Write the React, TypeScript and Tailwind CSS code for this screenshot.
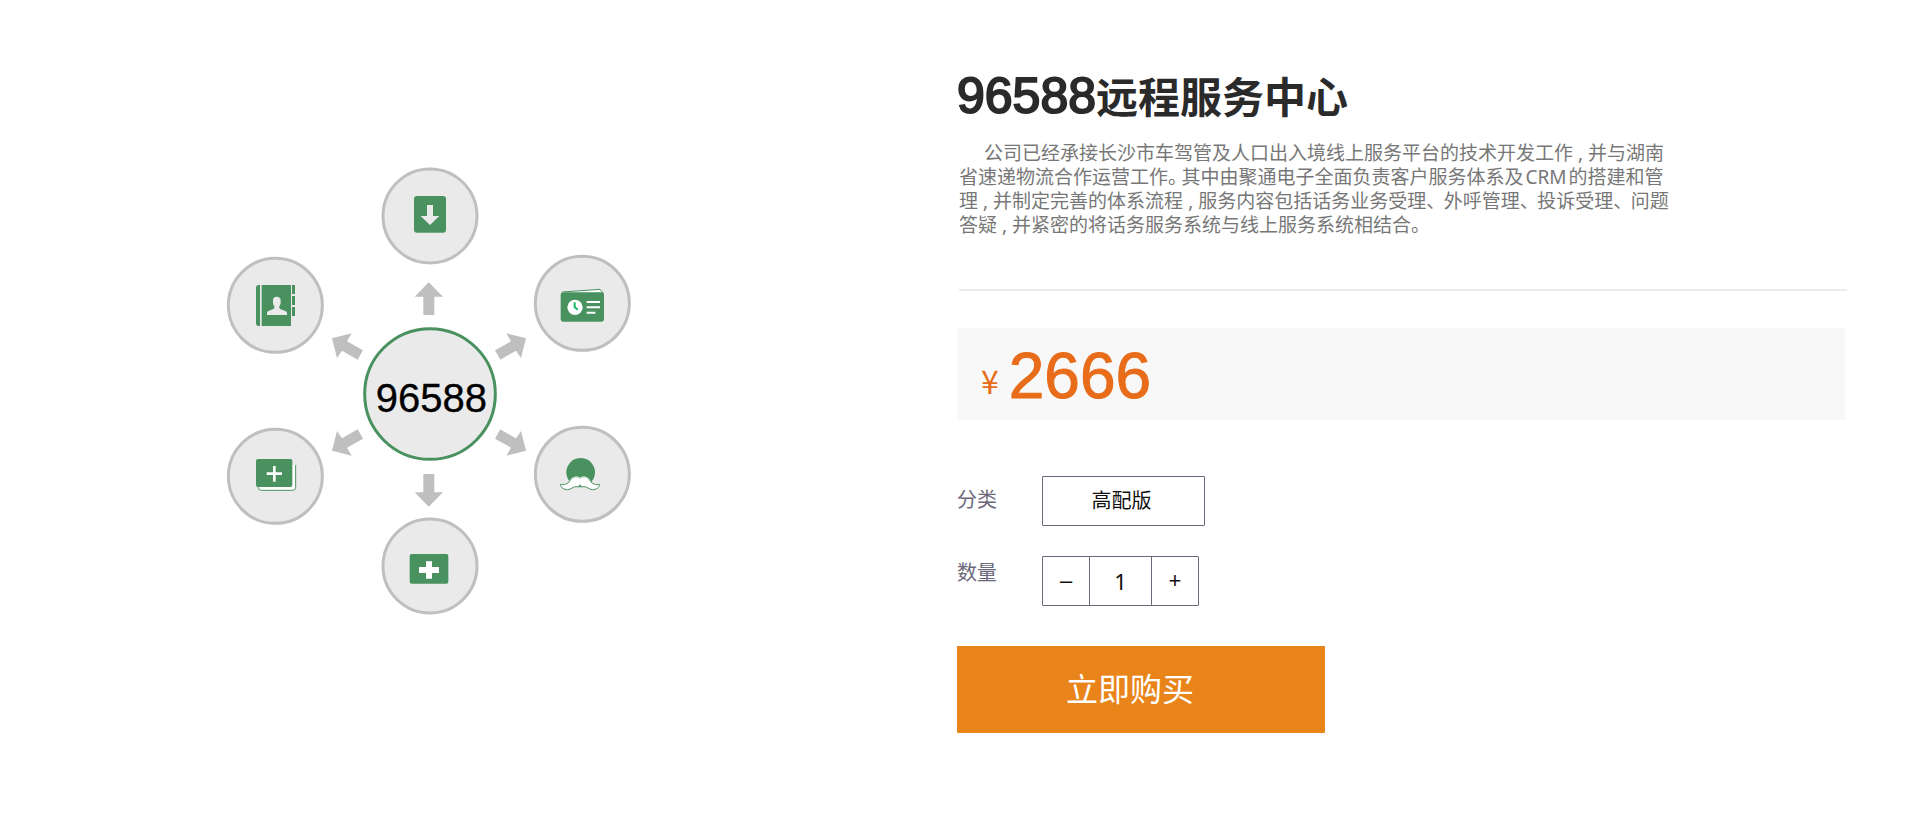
import { useState } from "react";

const GREEN = "#49915f";
const GREY = "#bfbfbf";

const satellites = [
  [660, 198],
  [1117, 460],
  [1117, 973],
  [660, 1248],
  [196, 979],
  [196, 466],
];

function Arrows() {
  const diagonal = "M948 565L889 550L903 574L855 601L871 629L918 602L933 624Z";
  const upright = "M656 397L699 440H673V495H640V440H614Z";
  return (
    <g fill={GREY}>
      <path d={upright} />
      <path d={upright} transform="translate(0 1467) scale(1 -1)" />
      <path d={diagonal} />
      <path d={diagonal} transform="translate(1314 0) scale(-1 1)" />
      <path d={diagonal} transform="translate(0 1467) scale(1 -1)" />
      <path d={diagonal} transform="translate(1314 1467) scale(-1 -1)" />
    </g>
  );
}

function DownloadIcon() {
  return (
    <g>
      <rect x="612" y="138" width="96" height="110" rx="9" fill={GREEN} />
      <path d="M651 165H669V198H688L660 225L632 198H651Z" fill="#eaeaea" />
    </g>
  );
}

function ContactsIcon() {
  return (
    <g fill={GREEN}>
      <path d="M150 405H146Q138 405 138 413V520Q138 528 146 528H150Z" />
      <rect x="155" y="405" width="88" height="123" />
      <rect x="246" y="405" width="9" height="27" />
      <rect x="246" y="438" width="9" height="27" />
      <rect x="246" y="471" width="9" height="27" />
      <path
        d="M200 440C192 440 188 445 189 452V460Q190 466 193 468V474C190 480 171 480 171 489V495H231V489C231 480 210 480 208 474V468Q211 466 212 460V452C213 445 208 440 200 440Z"
        fill="#eaeaea"
      />
    </g>
  );
}

function CardIcon() {
  return (
    <g>
      <path d="M1057 426L1170 418L1180 431" fill="#ffffff" stroke={GREEN} strokeWidth="3" />
      <path d="M1160 427L1169 421L1175 427Z" fill="#ffffff" />
      <rect x="1052" y="427" width="130" height="88" rx="7" fill={GREEN} />
      <circle cx="1095" cy="472" r="23" fill="#ffffff" />
      <path d="M1094 457V471L1103 479" fill="none" stroke="#19b765" strokeWidth="6" />
      <path d="M1130 456H1170M1130 472H1170M1130 488H1156" stroke="#ffffff" strokeWidth="6" />
    </g>
  );
}

function MustacheIcon() {
  return (
    <g>
      <circle cx="1112" cy="967" r="43" fill={GREEN} />
      <path
        d="M1110 985C1100 977 1088 981 1080 992C1073 1002 1062 1006 1051 1003C1052 1013 1062 1019 1073 1019C1085 1018 1088 1010 1098 1010C1104 1010 1107 1012 1110 1009C1113 1012 1116 1010 1122 1010C1132 1010 1136 1018 1147 1019C1159 1019 1168 1013 1169 1003C1158 1006 1147 1002 1140 992C1132 981 1120 977 1110 985Z"
        fill="#ffffff"
        stroke={GREEN}
        strokeWidth="3"
      />
      <path d="M1080 992C1088 981 1100 977 1110 985C1120 977 1132 981 1140 992" fill="none" stroke="#ffffff" strokeWidth="3" />
      <path d="M1104 1011L1110 1003L1116 1011Z" fill={GREEN} />
    </g>
  );
}

function FirstAidIcon() {
  return (
    <g>
      <rect x="599" y="1212" width="116" height="89" rx="6" fill={GREEN} />
      <path d="M657 1234V1286M627 1260H687" stroke="#ffffff" strokeWidth="18" />
    </g>
  );
}

function AddCardsIcon() {
  return (
    <g>
      <path d="M145 1010V1013Q146 1021 154 1021H248Q257 1021 257 1012V945H246V1010Z" fill="#ffffff" />
      <path d="M145 1010V1013Q146 1021 154 1021H248Q257 1021 257 1012V945" fill="none" stroke={GREEN} strokeWidth="3" />
      <rect x="138" y="927" width="109" height="84" rx="6" fill={GREEN} />
      <path d="M193 948V995M170 971H216" stroke="#ffffff" strokeWidth="8" />
    </g>
  );
}

function ServiceDiagram() {
  return (
    <svg
      viewBox="51 51 1212 1344"
      className="h-auto w-[404px] max-w-full"
      role="img"
      aria-label="96588"
    >
      {satellites.map(([cx, cy]) => (
        <circle key={`${cx}-${cy}`} cx={cx} cy={cy} r="141" fill="#eaeaea" stroke={GREY} strokeWidth="9" />
      ))}
      <Arrows />
      <circle cx="660" cy="732" r="196" fill="#eaeaea" stroke={GREEN} strokeWidth="9" />
      <DownloadIcon />
      <CardIcon />
      <MustacheIcon />
      <FirstAidIcon />
      <AddCardsIcon />
      <ContactsIcon />
      <text
        x="664"
        y="785"
        textAnchor="middle"
        fontSize="120"
        className="fill-black stroke-black stroke-1 font-['Liberation_Sans',sans-serif]"
      >
        96588
      </text>
    </svg>
  );
}

function Comma() {
  return <span className="mx-[5px]">,</span>;
}

function Pause() {
  return <span className="mr-2 [font-feature-settings:'halt']">、</span>;
}

export default function App() {
  const [quantity, setQuantity] = useState(1);

  return (
    <main className="grid min-h-screen grid-cols-[957fr_963fr] bg-white font-['Liberation_Sans','Noto_Sans_CJK_SC',sans-serif]">
      <section className="pt-[167px] pl-[227px]">
        <ServiceDiagram />
      </section>

      <section className="pt-[66px] pr-[75px]">
        <h1 className="text-[42px] leading-[60px] font-bold text-[#2b2a2b]">
          <span className="text-[50px] font-normal [-webkit-text-stroke:2px_#2b2a2b]">96588</span>
          远程服务中心
        </h1>

        <p className="mt-3 pl-0.5 indent-[25px] font-['Noto_Sans','Noto_Sans_CJK_SC',sans-serif] text-[19px] leading-6 whitespace-nowrap text-[#777777]">
          公司已经承接长沙市车驾管及人口出入境线上服务平台的技术开发工作
          <Comma />
          并与湖南
          <br />
          省速递物流合作运营工作
          <span className="mr-1 [font-feature-settings:'halt']">。</span>
          其中由聚通电子全面负责客户服务体系及
          <span className="mx-0.5">CRM</span>
          的搭建和管
          <br />
          理
          <Comma />
          并制定完善的体系流程
          <Comma />
          服务内容包括话务业务受理
          <Pause />
          外呼管理
          <Pause />
          投诉受理
          <Pause />
          问题
          <br />
          答疑
          <Comma />
          并紧密的将话务服务系统与线上服务系统相结合。
        </p>

        <hr className="mt-[52px] -mr-0.5 ml-0.5 border-t-2 border-[#e8edf0]" />

        <div className="mt-[37px] flex h-[92px] items-start gap-2.5 bg-[#f8f8f8] pt-3 pl-6 text-[#e86c19]">
          <span className="pt-1 font-['Noto_Sans_CJK_SC',sans-serif] text-[32px] leading-[72px]">¥</span>
          <span className="text-[64px] leading-[72px] [-webkit-text-stroke:1px_#e86c19]">2666</span>
        </div>

        <div className="mt-14 flex text-xl">
          <span id="category-label" className="w-[85px] pt-2.5 leading-7 text-[#6b6979]">
            分类
          </span>
          <button
            type="button"
            aria-labelledby="category-label category-value"
            className="h-[50px] w-[163px] rounded-[1px] border border-[#6b6979] pr-1 text-[#111111]"
          >
            <span id="category-value">高配版</span>
          </button>
        </div>

        <div className="mt-[30px] flex text-xl">
          <label htmlFor="quantity" className="w-[85px] pt-[3px] leading-7 text-[#6b6979]">
            数量
          </label>
          <div className="flex h-[50px] rounded-[1px] border border-[#6b6979] text-[22px] text-[#111111]">
            <button
              type="button"
              aria-label="减少"
              className="w-[46px]"
              onClick={() => setQuantity(Math.max(1, quantity - 1))}
            >
              –
            </button>
            <input
              id="quantity"
              type="text"
              inputMode="numeric"
              value={quantity}
              onChange={(event) => setQuantity(Number(event.target.value) || 1)}
              className="w-[63px] border-x border-[#6b6979] text-center font-['Noto_Sans',sans-serif] outline-none"
            />
            <button
              type="button"
              aria-label="增加"
              className="w-[46px]"
              onClick={() => setQuantity(quantity + 1)}
            >
              +
            </button>
          </div>
        </div>

        <button
          type="button"
          className="mt-10 h-[87px] w-[368px] rounded-b-[1px] bg-[#e88419] pr-[22px] text-[32px] text-white"
        >
          立即购买
        </button>
      </section>
    </main>
  );
}
